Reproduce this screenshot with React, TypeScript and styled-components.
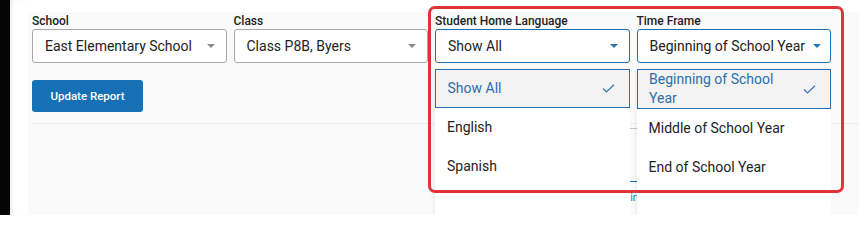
import React from "react";
import styled, { createGlobalStyle, css } from "styled-components";

const GlobalStyle = createGlobalStyle`
    html, body {
        margin: 0;
        padding: 0;
        height: 215px;
        overflow: hidden;
        background: #ffffff;
    }

    body {
        font-family: Roboto, "Liberation Sans", sans-serif;
        color: #222222;
    }

    #root {
        height: 100%;
    }
`;

const Page = styled.div`
    position: relative;
    display: flex;
    height: 215px;
    overflow: hidden;
`;

const Rail = styled.div`
    width: 10px;
    flex-shrink: 0;
    background: #050505;
`;

const Gutter = styled.div`
    width: 18px;
    flex-shrink: 0;
    background: #ffffff;
    box-shadow: inset 3px 0 4px -2px rgba(0, 0, 0, 0.12);
`;

const Main = styled.div`
    flex: 1;
    padding-top: 12px;
    display: flex;
    flex-direction: column;
`;

const Panel = styled.div`
    flex: 1;
    background: #fafafa;
    padding: 0 0 0 4px;
`;

const FilterRow = styled.div`
    display: flex;
    gap: 7px;
`;

const Field = styled.div`
    position: relative;
    width: 194.5px;
    flex-shrink: 0;
`;

const Label = styled.div`
    font-size: 12px;
    font-weight: 500;
    line-height: 14px;
    padding-top: 2px;
    margin-bottom: 1px;
    color: #222222;
    white-space: nowrap;
`;

const SelectBox = styled.div<{ $open?: boolean }>`
    box-sizing: border-box;
    height: 34px;
    display: flex;
    align-items: center;
    justify-content: space-between;
    padding: 0 11px 0 12px;
    background: #ffffff;
    border: 1px solid #a8a8a8;
    border-radius: 3px;
    font-size: 14px;
    color: #222222;
    white-space: nowrap;

    ${(p) =>
        p.$open &&
        css`
            border-color: #1d6fb3;
        `}
`;

const Caret = styled.span<{ $open?: boolean }>`
    width: 0;
    height: 0;
    margin-left: 8px;
    border-left: 4px solid transparent;
    border-right: 4px solid transparent;
    border-top: 4px solid ${(p) => (p.$open ? "#2a74b8" : "#8a8a8a")};
`;

const Menu = styled.div`
    position: absolute;
    top: calc(100% + 6px);
    left: 0;
    right: 0;
    height: 146px;
    background: #ffffff;
    box-shadow: -2px 0 3px rgba(0, 0, 0, 0.05);
    z-index: 2;
`;

const Option = styled.div<{ $selected?: boolean }>`
    box-sizing: border-box;
    min-height: 39px;
    display: flex;
    align-items: center;
    justify-content: space-between;
    padding: 0 14px 0 12px;
    font-size: 14px;
    line-height: 19px;
    color: #222222;

    ${(p) =>
        p.$selected &&
        css`
            background: #f3f3f3;
            border: 1.5px solid #2a6fb0;
            color: #2e6eaa;
            padding-left: 11.5px;
        `}
`;

const OptionText = styled.span`
    max-width: 140px;
`;

const Check = () => (
    <svg width="13" height="9" viewBox="0 0 13 9" fill="none">
        <path d="M1 4.5 L4.5 8 L12 0.8" stroke="#3a78b5" strokeWidth="1.2" />
    </svg>
);

const ButtonRow = styled.div`
    padding-top: 17px;
`;

const Button = styled.button`
    width: 111px;
    height: 32px;
    border: none;
    border-radius: 3px;
    background: #1570b6;
    color: #ffffff;
    font-family: Roboto, "Liberation Sans", sans-serif;
    font-size: 11.5px;
    font-weight: 500;
    padding: 0;
`;

const Divider = styled.div`
    margin-top: 11px;
    height: 1px;
    background: #ececec;
`;

const Backdrop = styled.div`
    margin-left: 585px;
    display: flex;
    flex-direction: column;
    width: 80px;
`;

const AxisLine = styled.div`
    margin-top: 4px;
    margin-left: 13px;
    height: 1px;
    background: #c4c4c4;
`;

const TabLine = styled.div`
    margin-top: 52px;
    margin-left: 13px;
    width: 36px;
    height: 1px;
    background: #1570b6;
`;

const LinkText = styled.span`
    margin-top: 9px;
    font-size: 11px;
    color: #3a78b5;
    white-space: nowrap;
`;

const Highlight = styled.div`
    position: absolute;
    left: 428px;
    top: 6px;
    width: 416px;
    height: 187px;
    box-sizing: border-box;
    border: 3px solid #e03339;
    border-radius: 7px;
    pointer-events: none;
    z-index: 5;
`;

type FilterProps = {
    label: string;
    value: string;
    options?: string[];
};

const Filter = ({ label, value, options }: FilterProps) => {
    const open = !!options;
    return (
        <Field>
            <Label>{label}</Label>
            <SelectBox $open={open}>
                <span>{value}</span>
                <Caret $open={open} />
            </SelectBox>
            {options && (
                <Menu>
                    {options.map((o) => (
                        <Option key={o} $selected={o === value}>
                            <OptionText>{o}</OptionText>
                            {o === value && <Check />}
                        </Option>
                    ))}
                </Menu>
            )}
        </Field>
    );
};

export default function App() {
    return (
        <>
            <GlobalStyle />
            <Page>
                <Rail />
                <Gutter />
                <Main>
                    <Panel>
                        <FilterRow>
                            <Filter label="School" value="East Elementary School" />
                            <Filter label="Class" value="Class P8B, Byers" />
                            <Filter
                                label="Student Home Language"
                                value="Show All"
                                options={["Show All", "English", "Spanish"]}
                            />
                            <Filter
                                label="Time Frame"
                                value="Beginning of School Year"
                                options={[
                                    "Beginning of School Year",
                                    "Middle of School Year",
                                    "End of School Year",
                                ]}
                            />
                        </FilterRow>
                        <ButtonRow>
                            <Button>Update Report</Button>
                        </ButtonRow>
                        <Divider />
                        <Backdrop>
                            <AxisLine />
                            <TabLine />
                            <LinkText>Point of Entry</LinkText>
                        </Backdrop>
                    </Panel>
                </Main>
                <Highlight />
            </Page>
        </>
    );
}
